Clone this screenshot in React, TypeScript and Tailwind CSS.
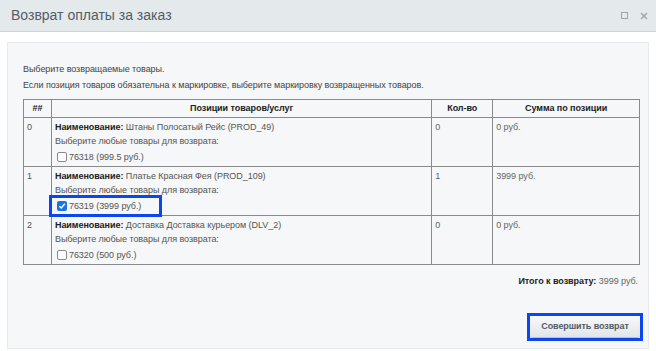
import React from "react";

const rows = [
  { n: "0", name: "Штаны Полосатый Рейс (PROD_49)", id: "76318 (999.5 руб.)", qty: "0", sum: "0 руб.", checked: false },
  { n: "1", name: "Платье Красная Фея (PROD_109)", id: "76319 (3999 руб.)", qty: "1", sum: "3999 руб.", checked: true },
  { n: "2", name: "Доставка Доставка курьером (DLV_2)", id: "76320 (500 руб.)", qty: "0", sum: "0 руб.", checked: false },
];

function Box({ checked }: { checked: boolean }) {
  if (checked) {
    return (
      <span className="w-[10px] h-[10px] rounded-[2px] bg-[#1a73e8] flex items-center justify-center">
        <svg width="8" height="8" viewBox="0 0 8 8">
          <path d="M1.3 4.2 L3.2 6 L6.8 1.8" fill="none" stroke="white" strokeWidth="1.4" />
        </svg>
      </span>
    );
  }
  return <span className="w-[10px] h-[10px] rounded-[2px] border border-[#8a8a8a] bg-white" />;
}

const cell = "border border-[#8a8a8a] align-top px-[3px] pt-[2px] leading-[14px]";

export default function App() {
  return (
    <div className="w-[656px] h-[351px] bg-white overflow-hidden" style={{ fontFamily: '"Liberation Sans", Arial, sans-serif' }}>
      <div className="h-[32px] bg-[#e4e9ec] border-b border-[#cfd5d9] flex items-center justify-between pl-[11px] pr-[8px]">
        <span className="text-[14px] text-[#535c69]">Возврат оплаты за заказ</span>
        <div className="flex items-center gap-[12px]">
          <span className="w-[7px] h-[7px] border border-[#a0a6ab]" />
          <svg width="8" height="8" viewBox="0 0 8 8">
            <path d="M1 1 L7 7 M7 1 L1 7" stroke="#a0a6ab" strokeWidth="1.5" />
          </svg>
        </div>
      </div>
      <div className="px-[7px] pt-[10px]">
        <div className="h-[307px] border border-[#e6eaec] bg-[#f5f7f8] px-[15px] pt-[19px] text-[9px] tracking-[-0.05px] text-[#444]">
          <div className="leading-[14px]">Выберите возвращаемые товары.</div>
          <div className="leading-[14px] mt-[2px]">Если позиция товаров обязательна к маркировке, выберите маркировку возвращенных товаров.</div>
          <table className="mt-[7px] w-[617px] border-collapse border border-[#6b6b6b] text-[9px]">
            <thead>
              <tr className="h-[18px]">
                <th className="w-[28px] border border-[#8a8a8a] font-bold text-center text-[#222]">##</th>
                <th className="w-[381px] border border-[#8a8a8a] font-bold text-center text-[#222]">Позиции товаров/услуг</th>
                <th className="w-[61px] border border-[#8a8a8a] font-bold text-center text-[#222]">Кол-во</th>
                <th className="w-[147px] border border-[#8a8a8a] font-bold text-center text-[#222]">Сумма по позиции</th>
              </tr>
            </thead>
            <tbody>
              {rows.map((r) => (
                <tr key={r.n}>
                  <td className={`${cell} text-[#555]`}>{r.n}</td>
                  <td className={`${cell} text-[#555]`}>
                    <div>
                      <span className="font-bold text-[#222]">Наименование:</span> {r.name}
                    </div>
                    <div>Выберите любые товары для возврата:</div>
                    <div className="relative flex items-center gap-[2px] h-[18px] pl-[2px]">
                      <Box checked={r.checked} />
                      <span>{r.id}</span>
                      {r.checked && (
                        <span className="absolute left-[-6px] top-[-2px] w-[113px] h-[22px] border-[3px] border-[#0a47f0]" />
                      )}
                    </div>
                  </td>
                  <td className={`${cell} text-[#666]`}>{r.qty}</td>
                  <td className={`${cell} text-[#666]`}>{r.sum}</td>
                </tr>
              ))}
            </tbody>
          </table>
          <div className="w-[615px] text-right mt-[9px] leading-[14px] text-[#666]">
            <span className="font-bold text-[#222]">Итого к возврату:</span> 3999 руб.
          </div>
          <div className="w-[620px] flex justify-end mt-[25px]">
            <div className="border-[3px] border-[#0a47f0]">
              <button className="h-[21px] w-[110px] mb-[1px] whitespace-nowrap rounded-[3px] bg-gradient-to-b from-[#f8f9f9] to-[#e2e5e7] shadow-[0_1px_1px_rgba(0,0,0,0.25)] text-[9px] font-bold tracking-[-0.1px] text-[#535c69]">
                Совершить возврат
              </button>
            </div>
          </div>
        </div>
      </div>
    </div>
  );
}
